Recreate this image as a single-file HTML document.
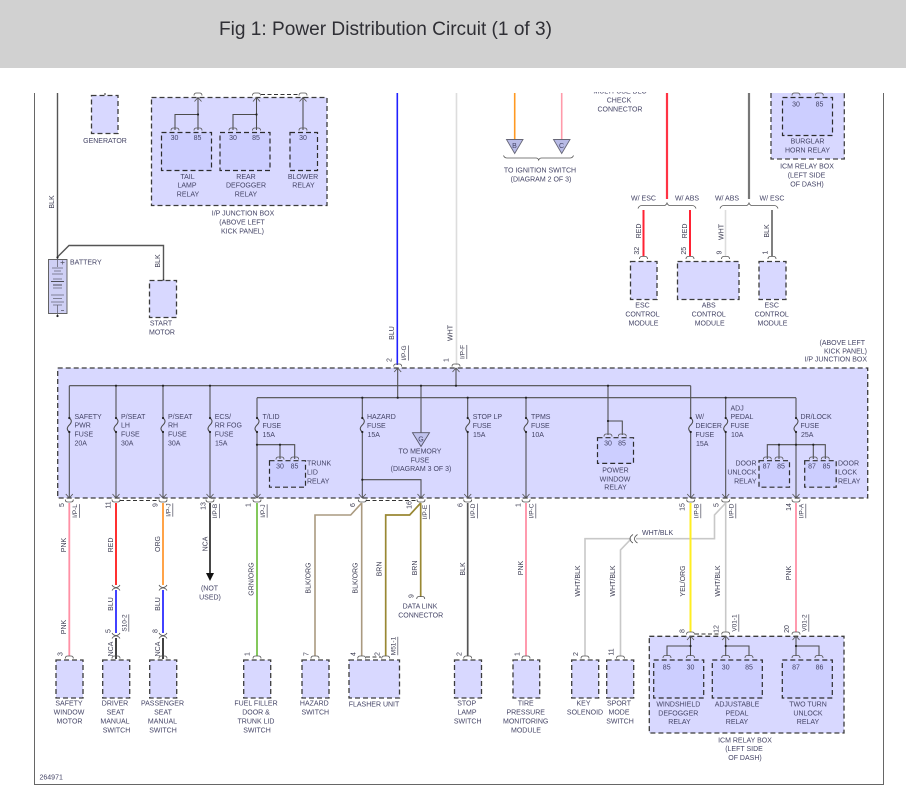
<!DOCTYPE html>
<html>
<head>
<meta charset="utf-8">
<title>Fig 1: Power Distribution Circuit (1 of 3)</title>
<style>
html,body{margin:0;padding:0;background:#fff}
body{width:906px;height:799px;overflow:hidden;position:relative}
svg{position:absolute;left:0;top:0;display:block;filter:blur(.25px)}
text{font-family:"Liberation Sans",sans-serif;font-size:7px;fill:#444466}
.hdr{font:19.5px "Liberation Sans",sans-serif;fill:#2f2f35}
.m{text-anchor:middle}
.e{text-anchor:end}
.r{text-anchor:middle;dominant-baseline:central;fill:#3c3c52}
.u{text-decoration:underline;font-size:6.5px}
.box{fill:#d8d8ff;stroke:#3c3c3c;stroke-width:1.3;stroke-dasharray:5 3}
.in{fill:#ccceff;stroke:#2c2c2c;stroke-width:1.2;stroke-dasharray:5 3}
.w{fill:none;stroke:#4c4c4c;stroke-width:1.05}
.t{fill:none;stroke:#555;stroke-width:.85}
.d{fill:none;stroke:#333;stroke-width:1;stroke-dasharray:4 2.5}
</style>
</head>
<body>
<svg width="906" height="799" viewBox="0 0 906 799" xmlns="http://www.w3.org/2000/svg">
<defs>
<path id="a" class="t" d="M-4 0Q-4-2.5-1.5-2.5H1.5Q4-2.5 4 0"/>
<path id="b" class="t" d="M-4-2.5Q-4 0-1.5 0H1.5Q4 0 4-2.5"/>
<path id="v" class="t" d="M-3.5-4L0 0L3.5-4"/>
<path id="n" class="t" d="M-3.5 4L0 0L3.5 4"/>
<circle id="o" r="1.1" fill="#222"/>
<clipPath id="cut"><rect x="0" y="92" width="906" height="30"/></clipPath>
</defs>

<rect x="0" y="0" width="906" height="799" fill="#fff"/>
<rect x="0" y="0" width="906" height="68" fill="#d1d1d1"/>
<text class="hdr" x="219" y="35" textLength="333" lengthAdjust="spacingAndGlyphs">Fig 1: Power Distribution Circuit (1 of 3)</text>

<!-- frame -->
<path d="M34.5 93V784.5H883.5V93" fill="none" stroke="#666" stroke-width="1"/>

<!-- top-left components -->
<rect class="box" x="91.5" y="95.5" width="26.5" height="38"/>
<rect class="box" x="151.5" y="97.5" width="175.5" height="108"/>
<rect class="in" x="161.5" y="132.5" width="50" height="38"/>
<rect class="in" x="220" y="132.5" width="50" height="38"/>
<rect class="in" x="290" y="132.5" width="27.5" height="38"/>
<path class="w" d="M175 130V114.5H198M198 130V97M233 130V114.5H256.5M256.5 130V97M303 130V97"/>
<use href="#o" x="198" y="114.5"/><use href="#o" x="256.5" y="114.5"/>
<use href="#a" x="175" y="130.5"/><use href="#a" x="198" y="130.5"/><use href="#a" x="233" y="130.5"/><use href="#a" x="256.5" y="130.5"/><use href="#a" x="303" y="130.5"/>
<use href="#a" x="198" y="95.5"/><use href="#a" x="256.5" y="95.5"/><use href="#a" x="303" y="95.5"/>
<use href="#n" x="198" y="97.5"/><use href="#n" x="256.5" y="97.5"/><use href="#n" x="303" y="97.5"/>
<path class="d" d="M261 94.5H299"/>
<path d="M105 93V95" stroke="#333" stroke-width="1"/>
<g class="m">
<text class="m" x="105" y="143">GENERATOR</text>
<text class="m" x="174.5" y="140">30</text><text class="m" x="197.5" y="140">85</text>
<text class="m" x="233" y="140">30</text><text class="m" x="256" y="140">85</text>
<text class="m" x="303" y="140">30</text>
<text class="m" x="187.5" y="179">TAIL</text><text class="m" x="187" y="187.5">LAMP</text><text class="m" x="188" y="196.5">RELAY</text>
<text class="m" x="246" y="179">REAR</text><text class="m" x="246" y="187.5">DEFOGGER</text><text class="m" x="246" y="196.5">RELAY</text>
<text class="m" x="303" y="179">BLOWER</text><text class="m" x="303.5" y="187.5">RELAY</text>
<text class="m" x="243" y="215.5">I/P JUNCTION BOX</text><text class="m" x="242" y="224.5">(ABOVE LEFT</text><text class="m" x="242.5" y="233.5">KICK PANEL)</text>
</g>

<!-- battery -->
<path d="M57.5 93V257" fill="none" stroke="#555" stroke-width="1.4"/>
<path d="M57.5 257L69 245.5H163.5V280" fill="none" stroke="#555" stroke-width="1.4"/>
<text class="r" transform="translate(52.5,202) rotate(-90)">BLK</text>
<text class="r" transform="translate(158.5,261) rotate(-90)">BLK</text>
<rect x="48.5" y="259.5" width="18.5" height="54" fill="#cfd0f5" stroke="#555" stroke-width=".9"/>
<path d="M57.5 258V267M52 268H63M54 271H61M52 274H63M53 279H62M53 288H62M51 295H64M53 298.5H62M51 302H64M53 305H62M57.5 305V316" stroke="#667" stroke-width=".8" fill="none"/>
<path d="M51 281.5H64M53 285H62" stroke="#222" stroke-width=".8" fill="none"/>
<path d="M60.5 262.5H64.5M62.5 260.5V264.5M61 310.5H64" stroke="#556" stroke-width=".7"/>
<use href="#o" x="57.5" y="257.5"/><use href="#o" x="57.5" y="316"/>
<use href="#o" x="163.5" y="280.5"/>
<text x="70" y="264.5">BATTERY</text>
<rect class="box" x="149.5" y="280.5" width="27" height="37"/>
<text class="m" x="161" y="325.5">START</text><text class="m" x="162" y="334.5">MOTOR</text>

<!-- top middle wires -->
<path d="M397.3 93V365" fill="none" stroke="#2020ff" stroke-width="1.6"/>
<path d="M456.5 93V365" fill="none" stroke="#ddd" stroke-width="1.6"/>
<text class="r" transform="translate(392.5,333) rotate(-90)">BLU</text>
<text class="r" transform="translate(451,333) rotate(-90)">WHT</text>
<text class="r" transform="translate(390,360) rotate(-90)">2</text>
<text class="r" transform="translate(447,360) rotate(-90)">1</text>
<text class="r u" transform="translate(404.5,353) rotate(-90)">I/P-G</text>
<text class="r u" transform="translate(463,352) rotate(-90)">I/P-F</text>

<path d="M514.7 93V139" fill="none" stroke="#ff9922" stroke-width="1.6"/>
<path d="M561.7 93V139" fill="none" stroke="#ff9aaa" stroke-width="1.6"/>
<path d="M506.5 139.5H523L514.7 153.5Z" fill="#b8bbe6" stroke="#667" stroke-width=".9"/>
<path d="M553.5 139.5H570L561.7 153.5Z" fill="#b8bbe6" stroke="#667" stroke-width=".9"/>
<text class="m" x="514.5" y="148">B</text><text class="m" x="561.5" y="148">C</text>
<path class="t" d="M503.5 155.5Q504.5 158 507 158H536Q538 158 538.7 160Q539.5 158 541.5 158H570Q572.5 158 573.5 155.5" stroke="#777"/>
<text class="m" x="540" y="172.5">TO IGNITION SWITCH</text><text class="m" x="541" y="181.5">(DIAGRAM 2 OF 3)</text>

<g clip-path="url(#cut)"><text class="m" x="620" y="93.5">MULTI-USE DLC</text></g>
<text class="m" x="619" y="102.7">CHECK</text><text class="m" x="620" y="111.7">CONNECTOR</text>

<path d="M667 93V199" fill="none" stroke="#ff3344" stroke-width="2.2"/>
<path d="M749 93V199" fill="none" stroke="#777" stroke-width="2.2"/>
<path class="t" d="M638 208.5Q639 205.5 642 205.5H664Q666 205.5 667 203Q668 205.5 670 205.5H692Q695 205.5 696 208.5"/>
<path class="t" d="M720 208.5Q721 205.5 724 205.5H746Q748 205.5 749 203Q750 205.5 752 205.5H774Q777 205.5 778 208.5"/>
<text class="m" x="643.5" y="200.7">W/ ESC</text><text class="m" x="687" y="200.7">W/ ABS</text>
<text class="m" x="727" y="200.7">W/ ABS</text><text class="m" x="772" y="200.7">W/ ESC</text>
<path d="M643.5 210V256M690 210V256" fill="none" stroke="#ff2233" stroke-width="2"/>
<path d="M725.5 210V256" fill="none" stroke="#ddd" stroke-width="1.6"/>
<path d="M772 210V256" fill="none" stroke="#555" stroke-width="1.5"/>
<use href="#a" x="643.5" y="259"/><use href="#a" x="690" y="259"/><use href="#a" x="725.5" y="259"/><use href="#a" x="772" y="259"/>
<text class="r" transform="translate(639.7,231) rotate(-90)">RED</text>
<text class="r" transform="translate(685.7,231) rotate(-90)">RED</text>
<text class="r" transform="translate(722,232) rotate(-90)">WHT</text>
<text class="r" transform="translate(767.7,231) rotate(-90)">BLK</text>
<text class="r" transform="translate(637.5,250.7) rotate(-90)">32</text>
<text class="r" transform="translate(684.5,250.7) rotate(-90)">25</text>
<text class="r" transform="translate(720,252.5) rotate(-90)">9</text>
<text class="r" transform="translate(766,252.5) rotate(-90)">1</text>
<rect class="box" x="630.5" y="261.5" width="26.5" height="38"/>
<rect class="box" x="677.5" y="261.5" width="61.5" height="38"/>
<rect class="box" x="759" y="261.5" width="27" height="38"/>
<text class="m" x="642.5" y="307.7">ESC</text><text class="m" x="642.5" y="316.7">CONTROL</text><text class="m" x="643.5" y="325.7">MODULE</text>
<text class="m" x="708.7" y="307.7">ABS</text><text class="m" x="708.7" y="316.7">CONTROL</text><text class="m" x="709.7" y="325.7">MODULE</text>
<text class="m" x="771.7" y="307.7">ESC</text><text class="m" x="771.7" y="316.7">CONTROL</text><text class="m" x="772.5" y="325.7">MODULE</text>

<!-- burglar horn box -->
<path d="M771 93V159H844.3V93" fill="#d8d8ff" stroke="#444" stroke-width="1.3" stroke-dasharray="5 3"/>
<rect class="in" x="782.5" y="97.5" width="50" height="38"/>
<use href="#a" x="796" y="95.5"/><use href="#a" x="819.3" y="95.5"/>
<text class="m" x="796" y="106.7">30</text><text class="m" x="819.5" y="106.7">85</text>
<text class="m" x="807.5" y="143.7">BURGLAR</text><text class="m" x="807.5" y="152.7">HORN RELAY</text>
<text class="m" x="807" y="168.7">ICM RELAY BOX</text><text class="m" x="806.5" y="177.7">(LEFT SIDE</text><text class="m" x="807" y="186.7">OF DASH)</text>

<!-- right side label -->
<text class="e" x="865" y="345">(ABOVE LEFT</text>
<text class="e" x="867" y="353.6">KICK PANEL)</text>
<text class="e" x="867" y="361.7">I/P JUNCTION BOX</text>

<!-- main junction box -->
<rect class="box" x="57.7" y="368" width="810" height="130"/>
<rect class="in" x="269.5" y="460.7" width="36" height="26.5"/>
<rect class="in" x="597.5" y="437.7" width="36" height="25.7"/>
<rect class="in" x="759" y="460.7" width="30.5" height="26.5"/>
<rect class="in" x="804.7" y="460.7" width="31.5" height="26.5"/>
<path class="w" d="M397.7 368V397.7M456 368V385.7
M69.3 385.7H690.7M257 397.7H796
M69.3 385.7V418q4 3 0 7q-4 4 0 7V498
M116 385.7V418q4 3 0 7q-4 4 0 7V498
M163 385.7V418q4 3 0 7q-4 4 0 7V498
M210 385.7V418q4 3 0 7q-4 4 0 7V498
M257 397.7V418q4 3 0 7q-4 4 0 7V498
M362.3 397.7V418q4 3 0 7q-4 4 0 7V498
M467.7 397.7V418q4 3 0 7q-4 4 0 7V498
M526 397.7V418q4 3 0 7q-4 4 0 7V498
M690.7 385.7V418q4 3 0 7q-4 4 0 7V498
M725.7 397.7V418q4 3 0 7q-4 4 0 7V498
M796 397.7V418q4 3 0 7q-4 4 0 7V498
M421 385.7V432.5
M257 444.7H294.7V459M280 444.7V459
M362.3 479.7H421V498
M608 385.7V435M608 421H622.3V435
M767.3 459V444.7H825.3V459M779 444.7V459M813.3 444.7V459"/>
<path d="M412.5 432.7H429.5L421 446.5Z" fill="#c0c2ee" stroke="#556" stroke-width=".9"/>
<text class="m" x="421" y="441.5">G</text>
<g>
<use href="#o" x="116" y="385.7"/><use href="#o" x="163" y="385.7"/><use href="#o" x="210" y="385.7"/><use href="#o" x="421" y="385.7"/><use href="#o" x="456" y="385.7"/><use href="#o" x="608" y="385.7"/>
<use href="#o" x="362.3" y="397.7"/><use href="#o" x="397.7" y="397.7"/><use href="#o" x="467.7" y="397.7"/><use href="#o" x="526" y="397.7"/><use href="#o" x="725.7" y="397.7"/>
<use href="#o" x="69.3" y="418"/><use href="#o" x="116" y="418"/><use href="#o" x="163" y="418"/><use href="#o" x="210" y="418"/><use href="#o" x="257" y="418"/><use href="#o" x="362.3" y="418"/><use href="#o" x="467.7" y="418"/><use href="#o" x="526" y="418"/><use href="#o" x="690.7" y="418"/><use href="#o" x="725.7" y="418"/><use href="#o" x="796" y="418"/>
<use href="#o" x="69.3" y="432"/><use href="#o" x="116" y="432"/><use href="#o" x="163" y="432"/><use href="#o" x="210" y="432"/><use href="#o" x="257" y="432"/><use href="#o" x="362.3" y="432"/><use href="#o" x="467.7" y="432"/><use href="#o" x="526" y="432"/><use href="#o" x="690.7" y="432"/><use href="#o" x="725.7" y="432"/><use href="#o" x="796" y="432"/>
<use href="#o" x="257" y="444.7"/><use href="#o" x="280" y="444.7"/><use href="#o" x="362.3" y="479.7"/><use href="#o" x="608" y="421"/>
<use href="#o" x="779" y="444.7"/><use href="#o" x="796" y="444.7"/><use href="#o" x="813.3" y="444.7"/>
</g>
<g>
<use href="#a" x="280" y="459.5"/><use href="#a" x="294.7" y="459.5"/>
<use href="#a" x="608" y="436.5"/><use href="#a" x="622.3" y="436.5"/>
<use href="#a" x="767.3" y="459.5"/><use href="#a" x="779" y="459.5"/><use href="#a" x="813.3" y="459.5"/><use href="#a" x="825.3" y="459.5"/>
<use href="#n" x="397.7" y="368"/><use href="#n" x="456" y="368"/>
<use href="#a" x="397.7" y="366.5"/><use href="#a" x="456" y="366.5"/>
</g>
<g>
<use href="#v" x="69.3" y="498"/><use href="#v" x="116" y="498"/><use href="#v" x="163" y="498"/><use href="#v" x="210" y="498"/><use href="#v" x="257" y="498"/><use href="#v" x="362.3" y="498"/><use href="#v" x="421" y="498"/><use href="#v" x="467.7" y="498"/><use href="#v" x="526" y="498"/><use href="#v" x="690.7" y="498"/><use href="#v" x="725.7" y="498"/><use href="#v" x="796" y="498"/>
<use href="#b" x="69.3" y="502"/><use href="#b" x="116" y="502"/><use href="#b" x="163" y="502"/><use href="#b" x="210" y="502"/><use href="#b" x="257" y="502"/><use href="#b" x="362.3" y="502"/><use href="#b" x="421" y="502"/><use href="#b" x="467.7" y="502"/><use href="#b" x="526" y="502"/><use href="#b" x="690.7" y="502"/><use href="#b" x="725.7" y="502"/><use href="#b" x="796" y="502"/>
</g>
<path class="d" d="M120 500.5H159M366 500.5H417"/>

<!-- fuse labels -->
<text x="74.5" y="419">SAFETY</text><text x="74.5" y="427.5">PWR</text><text x="74.5" y="436.5">FUSE</text><text x="74.5" y="445.5">20A</text>
<text x="121" y="419">P/SEAT</text><text x="121" y="427.5">LH</text><text x="121" y="436.5">FUSE</text><text x="121" y="445.5">30A</text>
<text x="168" y="419">P/SEAT</text><text x="168" y="427.5">RH</text><text x="168" y="436.5">FUSE</text><text x="168" y="445.5">30A</text>
<text x="214.7" y="419">ECS/</text><text x="214.7" y="427.5">RR FOG</text><text x="214.7" y="436.5">FUSE</text><text x="215" y="445.5">15A</text>
<text x="262.5" y="419">T/LID</text><text x="262.5" y="428">FUSE</text><text x="262.5" y="437">15A</text>
<text x="367" y="419">HAZARD</text><text x="367" y="428">FUSE</text><text x="367.5" y="437">15A</text>
<text x="472.7" y="419">STOP LP</text><text x="472.7" y="428">FUSE</text><text x="473" y="437">15A</text>
<text x="531" y="419">TPMS</text><text x="531" y="428">FUSE</text><text x="531.5" y="437">10A</text>
<text x="695.5" y="419">W/</text><text x="695.5" y="428">DEICER</text><text x="695.5" y="437">FUSE</text><text x="696" y="446">15A</text>
<text x="730.5" y="410.5">ADJ</text><text x="730.5" y="419">PEDAL</text><text x="730.5" y="428">FUSE</text><text x="731" y="437">10A</text>
<text x="800.5" y="419">DR/LOCK</text><text x="800.5" y="428">FUSE</text><text x="801" y="437">25A</text>
<text class="m" x="420" y="453.7">TO MEMORY</text><text class="m" x="420" y="462.7">FUSE</text><text class="m" x="421" y="471">(DIAGRAM 3 OF 3)</text>
<text class="m" x="280" y="468.7">30</text><text class="m" x="294.5" y="468.7">85</text>
<text x="307" y="465.7">TRUNK</text><text x="307" y="474.7">LID</text><text x="307" y="483.7">RELAY</text>
<text class="m" x="608" y="445.5">30</text><text class="m" x="622" y="445.5">85</text>
<text class="m" x="615.5" y="472.7">POWER</text><text class="m" x="615" y="481.7">WINDOW</text><text class="m" x="615.5" y="489.7">RELAY</text>
<text class="m" x="766.5" y="468.7">87</text><text class="m" x="781" y="468.7">85</text>
<text class="m" x="812" y="468.7">87</text><text class="m" x="826.5" y="468.7">85</text>
<text class="e" x="756.5" y="465.7">DOOR</text><text class="e" x="756.5" y="474.7">UNLOCK</text><text class="e" x="756.5" y="483.7">RELAY</text>
<text x="838" y="465.7">DOOR</text><text x="838" y="474.7">LOCK</text><text x="838" y="483.7">RELAY</text>

<!-- lower wires -->
<path d="M69.3 503V656M526 503V656M796 503V632" fill="none" stroke="#ff90a5" stroke-width="1.8"/>
<path d="M116 503V585" fill="none" stroke="#ff1a1a" stroke-width="1.8"/>
<path d="M163 503V585" fill="none" stroke="#ff9933" stroke-width="1.8"/>
<path d="M116 590V633M163 590V633" fill="none" stroke="#2222ff" stroke-width="1.7"/>
<path d="M116 638V659M163 638V659" fill="none" stroke="#222" stroke-width="1.7"/>
<path d="M210 503V574" fill="none" stroke="#333" stroke-width="1.8"/>
<path d="M206 573H214L210 581Z" fill="#111"/>
<path d="M257 503V656" fill="none" stroke="#66bb33" stroke-width="1.6"/>
<path d="M361.7 503L350.7 515H315V656M361.7 503V656" fill="none" stroke="#aa9a80" stroke-width="1.6"/>
<path d="M420.7 503L409.7 515H385.7V656M420.7 503V597" fill="none" stroke="#998833" stroke-width="1.7"/>
<path d="M467.7 503V656" fill="none" stroke="#555" stroke-width="1.7"/>
<path d="M725.7 503L714.5 515V538.7H636M631 538.7H585V656M631 539L620.5 550V656M725.7 503V632" fill="none" stroke="#c8c8c8" stroke-width="1.6"/>
<path d="M690.5 503V632" fill="none" stroke="#ffee22" stroke-width="2"/>
<path class="t" d="M633 534.5Q630 536.5 630 538.7Q630 541 633 543M637.5 534.5Q634.5 536.5 634.5 538.7Q634.5 541 637.5 543"/>
<path class="t" d="M112 585q1.5 2.5 4 2.5t4-2.5M159 585q1.5 2.5 4 2.5t4-2.5M112 590.5q1.5-2.5 4-2.5t4 2.5M159 590.5q1.5-2.5 4-2.5t4 2.5"/>
<path class="t" d="M112 633q1.5 2.5 4 2.5t4-2.5M159 633q1.5 2.5 4 2.5t4-2.5M112 638.5q1.5-2.5 4-2.5t4 2.5M159 638.5q1.5-2.5 4-2.5t4 2.5"/>
<g>
<use href="#a" x="69.3" y="658.5"/><use href="#a" x="116" y="658.5"/><use href="#a" x="163" y="658.5"/><use href="#a" x="257" y="658.5"/><use href="#a" x="315" y="658.5"/><use href="#a" x="361.7" y="658.5"/><use href="#a" x="385.7" y="658.5"/><use href="#a" x="420.7" y="599"/><use href="#a" x="467.7" y="658.5"/><use href="#a" x="526" y="658.5"/><use href="#a" x="585" y="658.5"/><use href="#a" x="620.5" y="658.5"/>
</g>
<path class="d" d="M366 657H381"/>

<!-- bottom components -->
<rect class="box" x="56" y="660" width="27" height="38"/>
<rect class="box" x="102.7" y="660" width="27" height="38"/>
<rect class="box" x="149.7" y="660" width="27" height="38"/>
<rect class="box" x="243.7" y="660" width="27" height="38"/>
<rect class="box" x="302" y="660" width="27" height="38"/>
<rect class="box" x="349" y="660" width="50.5" height="38"/>
<rect class="box" x="454.5" y="660" width="27" height="38"/>
<rect class="box" x="513" y="660" width="26.7" height="38"/>
<rect class="box" x="571.7" y="660" width="27" height="38"/>
<rect class="box" x="606.7" y="660" width="27" height="38"/>

<rect class="box" x="649.3" y="636.3" width="194.7" height="96.7"/>
<rect class="in" x="653.7" y="660" width="50" height="38"/>
<rect class="in" x="712.3" y="660" width="50" height="38"/>
<rect class="in" x="782.3" y="660" width="50" height="38"/>
<path class="w" d="M690.5 636V656M667 656V646H690.5M725.7 636V656M725.7 646H749V656M796 636V656M796 646H819V656"/>
<use href="#o" x="690.5" y="646"/><use href="#o" x="725.7" y="646"/><use href="#o" x="796" y="646"/>
<use href="#a" x="667" y="658"/><use href="#a" x="690.5" y="658"/><use href="#a" x="725.7" y="658"/><use href="#a" x="749" y="658"/><use href="#a" x="796" y="658"/><use href="#a" x="819" y="658"/>
<use href="#a" x="690.5" y="634.5"/><use href="#a" x="725.7" y="634.5"/><use href="#a" x="796" y="634.5"/>
<use href="#n" x="690.5" y="636"/><use href="#n" x="725.7" y="636"/><use href="#n" x="796" y="636"/>
<path class="d" d="M695 634H721"/>

<text class="m" x="666.7" y="669.7">85</text><text class="m" x="690.5" y="669.7">30</text>
<text class="m" x="725.7" y="669.7">30</text><text class="m" x="749" y="669.7">85</text>
<text class="m" x="796" y="669.7">87</text><text class="m" x="819.5" y="669.7">86</text>

<!-- rotated lower labels -->
<text class="r" transform="translate(64.5,545) rotate(-90)">PNK</text>
<text class="r" transform="translate(64.5,627) rotate(-90)">PNK</text>
<text class="r" transform="translate(111.5,545) rotate(-90)">RED</text>
<text class="r" transform="translate(111.5,604) rotate(-90)">BLU</text>
<text class="r" transform="translate(111.5,649) rotate(-90)">NCA</text>
<text class="r u" transform="translate(125,623) rotate(-90)">S10-2</text>
<text class="r" transform="translate(158.5,544) rotate(-90)">ORG</text>
<text class="r" transform="translate(158.5,604) rotate(-90)">BLU</text>
<text class="r" transform="translate(158.5,649) rotate(-90)">NCA</text>
<text class="r" transform="translate(206,544) rotate(-90)">NCA</text>
<text class="r" transform="translate(252,579) rotate(-90)">GRN/ORG</text>
<text class="r" transform="translate(309,578) rotate(-90)">BLK/ORG</text>
<text class="r" transform="translate(356,578) rotate(-90)">BLK/ORG</text>
<text class="r" transform="translate(380,569) rotate(-90)">BRN</text>
<text class="r" transform="translate(415.5,568) rotate(-90)">BRN</text>
<text class="r" transform="translate(463.7,569) rotate(-90)">BLK</text>
<text class="r" transform="translate(521.7,568) rotate(-90)">PNK</text>
<text class="r" transform="translate(578.7,581) rotate(-90)">WHT/BLK</text>
<text class="r" transform="translate(613.7,581) rotate(-90)">WHT/BLK</text>
<text class="r" transform="translate(683.7,581) rotate(-90)">YEL/ORG</text>
<text class="r" transform="translate(718.7,581) rotate(-90)">WHT/BLK</text>
<text class="r" transform="translate(789.7,573) rotate(-90)">PNK</text>
<text x="642" y="535">WHT/BLK</text>

<text class="r u" transform="translate(75.7,511) rotate(-90)">I/P-L</text>
<text class="r u" transform="translate(169,510) rotate(-90)">I/P-J</text>
<text class="r u" transform="translate(215.7,511) rotate(-90)">I/P-B</text>
<text class="r u" transform="translate(263.3,511) rotate(-90)">I/P-J</text>
<text class="r u" transform="translate(425.5,512) rotate(-90)">I/P-E</text>
<text class="r u" transform="translate(473.7,511) rotate(-90)">I/P-D</text>
<text class="r u" transform="translate(532,511) rotate(-90)">I/P-C</text>
<text class="r u" transform="translate(697,511) rotate(-90)">I/P-B</text>
<text class="r u" transform="translate(732,511) rotate(-90)">I/P-D</text>
<text class="r u" transform="translate(802,511) rotate(-90)">I/P-A</text>
<text class="r u" transform="translate(394,646) rotate(-90)">M51-1</text>
<text class="r u" transform="translate(735,623) rotate(-90)">V01-1</text>
<text class="r u" transform="translate(805,623) rotate(-90)">V01-2</text>

<text class="r" transform="translate(62.5,505) rotate(-90)">5</text>
<text class="r" transform="translate(109,505) rotate(-90)">11</text>
<text class="r" transform="translate(156,505) rotate(-90)">9</text>
<text class="r" transform="translate(204,506) rotate(-90)">13</text>
<text class="r" transform="translate(249,505) rotate(-90)">1</text>
<text class="r" transform="translate(353.7,505) rotate(-90)">6</text>
<text class="r" transform="translate(410,505) rotate(-90)">16</text>
<text class="r" transform="translate(461,505) rotate(-90)">6</text>
<text class="r" transform="translate(519,505) rotate(-90)">1</text>
<text class="r" transform="translate(683,507) rotate(-90)">15</text>
<text class="r" transform="translate(717,505) rotate(-90)">5</text>
<text class="r" transform="translate(789.5,507) rotate(-90)">14</text>
<text class="r" transform="translate(109,631) rotate(-90)">5</text>
<text class="r" transform="translate(156,631) rotate(-90)">8</text>
<text class="r" transform="translate(412,596) rotate(-90)">9</text>
<text class="r" transform="translate(683,631) rotate(-90)">8</text>
<text class="r" transform="translate(717,629) rotate(-90)">12</text>
<text class="r" transform="translate(787.5,629) rotate(-90)">20</text>
<text class="r" transform="translate(61,654) rotate(-90)">3</text>
<text class="r" transform="translate(248,654) rotate(-90)">1</text>
<text class="r" transform="translate(307,654) rotate(-90)">7</text>
<text class="r" transform="translate(354,654) rotate(-90)">4</text>
<text class="r" transform="translate(378,654) rotate(-90)">2</text>
<text class="r" transform="translate(460,654) rotate(-90)">2</text>
<text class="r" transform="translate(518,654) rotate(-90)">1</text>
<text class="r" transform="translate(576.5,654) rotate(-90)">2</text>
<text class="r" transform="translate(612,652) rotate(-90)">11</text>

<!-- bottom text labels -->
<text class="m" x="209.5" y="590.7">(NOT</text><text class="m" x="210" y="599.7">USED)</text>
<text class="m" x="420" y="608.7">DATA LINK</text><text class="m" x="420.7" y="617.7">CONNECTOR</text>
<text class="m" x="69" y="705.7">SAFETY</text><text class="m" x="69" y="714.7">WINDOW</text><text class="m" x="69.5" y="723.7">MOTOR</text>
<text class="m" x="115" y="705.7">DRIVER</text><text class="m" x="115.5" y="714.7">SEAT</text><text class="m" x="115" y="723.7">MANUAL</text><text class="m" x="116.5" y="732.7">SWITCH</text>
<text class="m" x="162.5" y="705.7">PASSENGER</text><text class="m" x="163" y="714.7">SEAT</text><text class="m" x="162.5" y="723.7">MANUAL</text><text class="m" x="163" y="732.7">SWITCH</text>
<text class="m" x="256" y="705.7">FUEL FILLER</text><text class="m" x="256" y="714.7">DOOR &amp;</text><text class="m" x="256" y="723.7">TRUNK LID</text><text class="m" x="257" y="732.7">SWITCH</text>
<text class="m" x="314.3" y="705.7">HAZARD</text><text class="m" x="315.3" y="714.7">SWITCH</text>
<text class="m" x="374" y="706.7">FLASHER UNIT</text>
<text class="m" x="466.7" y="705.7">STOP</text><text class="m" x="467" y="714.7">LAMP</text><text class="m" x="467.7" y="723.7">SWITCH</text>
<text class="m" x="525.7" y="705.7">TIRE</text><text class="m" x="525.7" y="714.7">PRESSURE</text><text class="m" x="525.7" y="723.7">MONITORING</text><text class="m" x="526" y="732.7">MODULE</text>
<text class="m" x="583.5" y="705.7">KEY</text><text class="m" x="585" y="714.7">SOLENOID</text>
<text class="m" x="619" y="705.7">SPORT</text><text class="m" x="619" y="714.7">MODE</text><text class="m" x="620" y="723.7">SWITCH</text>
<text class="m" x="678.3" y="706.7">WINDSHIELD</text><text class="m" x="678.3" y="715.7">DEFOGGER</text><text class="m" x="679.5" y="724">RELAY</text>
<text class="m" x="737" y="706.7">ADJUSTABLE</text><text class="m" x="737" y="715.7">PEDAL</text><text class="m" x="737" y="724">RELAY</text>
<text class="m" x="808" y="706.7">TWO TURN</text><text class="m" x="808" y="715.7">UNLOCK</text><text class="m" x="808" y="724">RELAY</text>
<text class="m" x="745" y="742.7">ICM RELAY BOX</text><text class="m" x="744" y="751">(LEFT SIDE</text><text class="m" x="745" y="760">OF DASH)</text>
<text x="39.5" y="779.7">264971</text>
</svg>
</body>
</html>
